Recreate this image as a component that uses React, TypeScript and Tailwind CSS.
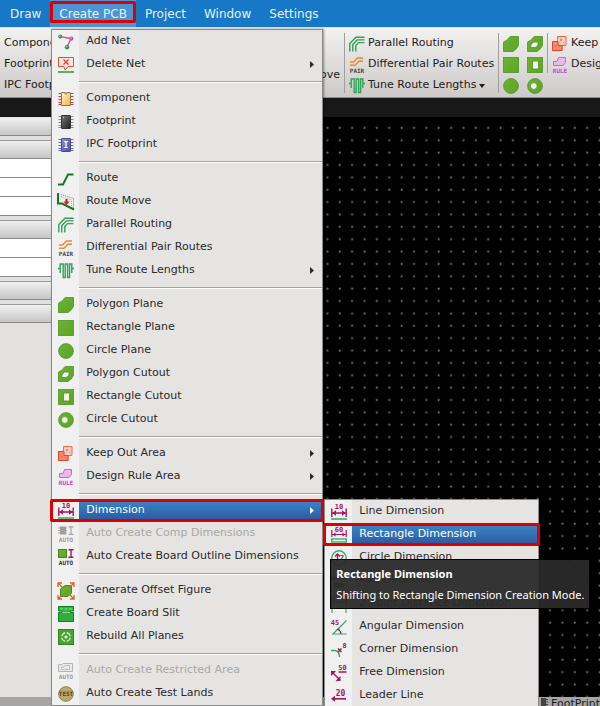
import type { ReactNode } from "react";
import clsx from "clsx";

type IconProps = { children: ReactNode };

const Icon = ({ children }: IconProps) => (
    <svg viewBox="0 0 16 16" className="h-4 w-4 shrink-0 overflow-visible" fill="none" aria-hidden="true">
        {children}
    </svg>
);

// tiny caption used inside of the icons
const Caption = ({ x = 8, y = 16, fill, size = 6, children }: any) => (
    <text
        x={x}
        y={y}
        fill={fill}
        fontSize={size}
        fontWeight="bold"
        textAnchor="middle"
        fontFamily='"DejaVu Sans Mono", monospace'
    >
        {children}
    </text>
);

const pins = [2, 5, 8, 11, 13];

const Chip = ({ body, edge, pin, children }: any) => (
    <Icon>
        {pins.map((y) => (
            <path key={y} d={`M0.5 ${y + 0.5}H15.5`} stroke={pin} />
        ))}
        <rect x="3.5" y="1.5" width="9" height="13" rx="0.5" fill={body} stroke={edge} />
        {children}
    </Icon>
);

const AddNetIcon = () => (
    <Icon>
        <path d="M2 2.5L13 4.5L9 13" stroke="#d64f9a" strokeWidth="1.4" />
        <circle cx="2.2" cy="2.6" r="2" fill="#2f9350" />
        <circle cx="13.4" cy="4.6" r="2.1" fill="#c8508e" />
        <circle cx="9" cy="13.2" r="2.2" fill="#2f9350" />
        <circle cx="1.8" cy="2.2" r="0.8" fill="#a9dcb6" />
        <circle cx="13" cy="4.2" r="0.8" fill="#f0b6d6" />
        <circle cx="8.6" cy="12.8" r="0.8" fill="#a9dcb6" />
    </Icon>
);

const DeleteNetIcon = () => (
    <Icon>
        <path d="M0.5 0.5H15.5V9.5H10L7 13L6 9.5H0.5Z" fill="#fde4de" stroke="#e2503a" />
        <path d="M5.5 2.5L10.5 7.5M10.5 2.5L5.5 7.5" stroke="#e03a28" strokeWidth="1.2" />
        <path d="M0 15H16" stroke="#18981e" strokeWidth="1.4" />
    </Icon>
);

const ComponentIcon = () => (
    <Chip body="url(#amber)" edge="#8d7646" pin="#c63b45">
        <path d="M6.5 1.5a1.5 1.5 0 0 0 3 0" fill="#f0f0f0" stroke="#8d7646" />
    </Chip>
);

const FootprintIcon = () => (
    <Chip body="url(#black)" edge="#333" pin="#8a8a8a">
        <rect x="5" y="3" width="1" height="1" fill="#d4d46a" />
    </Chip>
);

const IpcIcon = () => (
    <Chip body="url(#indigo)" edge="#4a4a94" pin="#6b6ba4">
        <Caption y={11} size={8} fill="#fff">
            I
        </Caption>
    </Chip>
);

const RouteIcon = () => (
    <Icon>
        <path d="M0 13.5H5L10 3.5H15.5" stroke="#0f7d1c" strokeWidth="2" />
    </Icon>
);

const RouteMoveIcon = () => (
    <Icon>
        <path d="M3 0.5L15.5 4.5V14" stroke="#3fa05a" strokeDasharray="1 1" />
        <path d="M3 2.5L13.5 6V12" stroke="#7dbf8f" strokeDasharray="1 1" />
        <path d="M0 -1V9.5H4L16 15.5" stroke="#12791f" strokeWidth="2" />
        <path d="M8.5 5V9" stroke="#d8141c" strokeWidth="2" />
        <path d="M5.5 7.5H11.5L8.5 11Z" fill="#d8141c" />
    </Icon>
);

const ParallelIcon = () => (
    <Icon>
        <path
            d="M0.8 15.5V7.5L7 1.2H15.5M3.8 15.5V8.5L8.2 3.9H15.5M6.8 15.5V9.5L9.5 6.6H15.5"
            stroke="#2f9f54"
            strokeWidth="1.4"
        />
    </Icon>
);

const PairIcon = () => (
    <Icon>
        <path d="M1 5H4.5L8.5 1H14M1 8.2H6L10 4.2H14" stroke="#ee8a2c" strokeWidth="1.4" />
        <Caption fill="#4a4538">PAIR</Caption>
    </Icon>
);

// meander between two short leads
const TuneIcon = () => (
    <Icon>
        <path
            d="M0 5.5H2.2M2.2 10V1H5.2V14.5H7.2V1H9.6V14.5H11.6V1H13.8V10M13.8 5.5H16"
            stroke="#2fa458"
            strokeWidth="1.4"
        />
    </Icon>
);

const PolygonIcon = ({ cutout }: { cutout?: boolean }) => (
    <Icon>
        <path
            d="M7 0.5H15.5V9.5Q14 13 10 15.5H0.5V6Q4 5 7 0.5Z"
            fill="url(#leaf)"
            stroke="#4f9422"
            strokeWidth="0.8"
            strokeLinejoin="round"
        />
        {cutout && <path d="M6.5 6H11V9Q9.5 11.5 7.5 11.5H3.8V9Q5 8 6.5 6Z" fill="#f4f4f4" stroke="#4f9422" strokeWidth="0.8" />}
    </Icon>
);

const RectangleIcon = ({ cutout }: { cutout?: boolean }) => (
    <Icon>
        <rect x="0.5" y="0.5" width="15" height="15" fill="url(#leaf)" stroke="#4f9422" strokeWidth="0.8" />
        {cutout && <rect x="5.5" y="4" width="6" height="8" fill="#f4f4f4" stroke="#4f9422" strokeWidth="0.8" />}
    </Icon>
);

const CircleIcon = ({ cutout }: { cutout?: boolean }) => (
    <Icon>
        <circle cx="8" cy="8" r="7.4" fill="url(#leaf)" stroke="#4f9422" strokeWidth="0.8" />
        {cutout && <circle cx="6.8" cy="8" r="3.4" fill="#f4f4f4" stroke="#4f9422" strokeWidth="0.8" />}
    </Icon>
);

const KeepOutIcon = () => (
    <Icon>
        <path d="M5.5 0.5H14V9.5H10V14.5H0.5V5.5H5.5Z" fill="#fbc9b8" stroke="#ee6a4c" />
        <path d="M0.5 5.5H6V9.5H10V14.5H0.5Z" fill="#f58b6c" stroke="#e2452c" />
        <path d="M8 3L10 5M10 3L8 5M11 6L12.5 7.5M2.5 9L5 12M5 9L2.5 12M7 11L8.5 13" stroke="#e9674a" strokeWidth="0.7" />
    </Icon>
);

const RuleIcon = () => (
    <Icon>
        <path d="M6.5 0.5H13.5V5.5L11 8.5H1.5V4.5H5Z" fill="#eeb8ee" stroke="#d160d1" />
        <Caption fill="#cb42cb">RULE</Caption>
    </Icon>
);

const LineDimIcon = () => (
    <Icon>
        <Caption y={5} size={7} fill="#a8145c">
            10
        </Caption>
        <path d="M0.8 4.5V13M15.2 4.5V13M1.5 9H14.5" stroke="#a8145c" strokeWidth="1.4" />
        <path d="M1.5 9L5 6.2V11.8ZM14.5 9L11 6.2V11.8Z" fill="#a8145c" />
        <path d="M0 15H16" stroke="#35b06a" strokeWidth="1.6" />
    </Icon>
);

const RectDimIcon = () => (
    <Icon>
        <Caption y={5} size={7} fill="#a8145c">
            60
        </Caption>
        <path d="M0.8 3V10M15.2 3V10M1.5 7.5H14.5" stroke="#a8145c" strokeWidth="1.2" />
        <path d="M1.5 7.5L4.5 5.5V9.5ZM14.5 7.5L11.5 5.5V9.5Z" fill="#a8145c" />
        <rect x="0.7" y="12" width="14.6" height="3" stroke="#35b06a" strokeWidth="1.4" />
    </Icon>
);

const CircleDimIcon = () => (
    <Icon>
        <circle cx="8" cy="8" r="7.2" stroke="#35b06a" strokeWidth="1.4" />
        <path d="M6.5 12V4.5M4 6.5L6.5 4L9 6.5" stroke="#a8145c" strokeWidth="1.4" />
        <Caption x={11} y={10} size={7} fill="#a8145c">
            2
        </Caption>
    </Icon>
);

const PadDimIcon = () => (
    <Icon>
        <path d="M1 2V9M15 2V9M1 5.5H15" stroke="#a8145c" />
        <rect x="3" y="10" width="10" height="5" fill="#35b06a" />
    </Icon>
);

const PointDimIcon = () => (
    <Icon>
        <path d="M1 2V10M15 2V10M1 6H15" stroke="#a8145c" />
        <path d="M1 12V17M15 12V17" stroke="#35b06a" strokeWidth="1.2" />
    </Icon>
);

const AngularIcon = () => (
    <Icon>
        <Caption x={4} y={5.5} size={7} fill="#a8145c">
            45
        </Caption>
        <path d="M15.5 1.5L2 15H15.5" stroke="#35a868" strokeWidth="1.2" />
        <path d="M6.5 10A6 6 0 0 1 10 15M6 10.5H8.5" stroke="#a8145c" strokeWidth="1.2" />
    </Icon>
);

const CornerIcon = () => (
    <Icon>
        <path d="M0 8.5H4Q8.5 9 8.5 15" stroke="#35a868" strokeWidth="1.5" />
        <path d="M7 6.5L10.5 10M10.5 6.5L7 10" stroke="#a8145c" strokeWidth="1.5" />
        <Caption x={13.5} y={6} size={7} fill="#a8145c">
            8
        </Caption>
    </Icon>
);

const FreeIcon = () => (
    <Icon>
        <Caption x={11.5} y={5} size={7} fill="#a8145c">
            50
        </Caption>
        <path d="M7.5 7H15.5M1 7L9 15" stroke="#a8145c" strokeWidth="1.4" />
        <path d="M0 6H5L0 11ZM9.5 16H4.5L9.5 11Z" fill="#a8145c" />
    </Icon>
);

const LeaderIcon = () => (
    <Icon>
        <Caption x={9.5} y={8} size={8} fill="#a8145c">
            20
        </Caption>
        <path d="M2 10.8H15" stroke="#a8145c" strokeWidth="1.6" />
        <path d="M0 10.8L4 7.8V13.8Z" fill="#a8145c" />
    </Icon>
);

const AutoCompIcon = () => (
    <Icon>
        <rect x="2" y="0.5" width="6" height="8" fill="#9b9b9b" />
        <path d="M0 2H9M0 4.5H9M0 7H9" stroke="#a5a5a5" />
        <path d="M10.5 0.8H15.5M10.5 8.3H15.5M13 1V8" stroke="#a5a5a5" strokeWidth="1.2" />
        <Caption fill="#9a9a9a">AUTO</Caption>
    </Icon>
);

const AutoBoardIcon = () => (
    <Icon>
        <rect x="0.5" y="0.5" width="8" height="8" fill="url(#leaf)" stroke="#3c8f1a" />
        <path d="M10.5 0.8H15.5M10.5 8.3H15.5M13 1V8" stroke="#a8145c" strokeWidth="1.4" />
        <Caption fill="#333">AUTO</Caption>
    </Icon>
);

const OffsetIcon = () => (
    <Icon>
        <path d="M7 2.5H13.5V10L10 13.5H2.5V6Z" fill="url(#leaf)" stroke="#3f9020" />
        <path
            d="M0 4V0H4M12 0H16V4M16 12V16H12M4 16H0V12M0.5 0.5L4.5 4.5M15.5 0.5L11.5 4.5M15.5 15.5L11.5 11.5M0.5 15.5L4.5 11.5"
            stroke="#e0602c"
            strokeWidth="1.3"
        />
    </Icon>
);

const SlitIcon = () => (
    <Icon>
        <path d="M0.5 0.5H15.5V5H12V6.5H4V5H0.5Z" fill="#2fb43c" stroke="#12801f" />
        <path d="M0.5 6.5H15.5V15.5H0.5Z" fill="#2fae3a" stroke="#12801f" />
        <path d="M2 3H5M6.5 3H9.5M11 3H14M4 6.5H12" stroke="#aee8ae" strokeWidth="0.8" />
    </Icon>
);

const RebuildIcon = () => (
    <Icon>
        <rect x="0.5" y="0.5" width="15" height="15" fill="#4ba332" stroke="#348524" />
        <circle cx="8" cy="8" r="4.2" stroke="#d9f0d2" strokeWidth="1.4" />
        <path d="M8 2.5V5.5M8 10.5V13.5M2.5 8H5.5M10.5 8H13.5" stroke="#4ba332" strokeWidth="1.6" />
        <circle cx="8" cy="8" r="1.6" fill="#e4f6de" />
    </Icon>
);

const RestrictedIcon = () => (
    <Icon>
        <path d="M0.5 8.5V1.5H4L5 0.5H14.5V8.5Z" fill="#e9e9e9" stroke="#b5b5b5" />
        <path d="M3.5 6.5V4H6L7 2.5H11.5V6.5Z" stroke="#c0c0c0" />
        <Caption fill="#9a9a9a">AUTO</Caption>
    </Icon>
);

const TestIcon = () => (
    <Icon>
        <circle cx="8" cy="8" r="7.3" fill="#b9a967" stroke="#8c8052" />
        <Caption y={10} fill="#4a4226">
            TEST
        </Caption>
    </Icon>
);

type Item = {
    label: string;
    icon: ReactNode;
    submenu?: boolean;
    disabled?: boolean;
    active?: boolean;
};

const menuGroups: Item[][] = [
    [
        { label: "Add Net", icon: <AddNetIcon /> },
        { label: "Delete Net", icon: <DeleteNetIcon />, submenu: true },
    ],
    [
        { label: "Component", icon: <ComponentIcon /> },
        { label: "Footprint", icon: <FootprintIcon /> },
        { label: "IPC Footprint", icon: <IpcIcon /> },
    ],
    [
        { label: "Route", icon: <RouteIcon /> },
        { label: "Route Move", icon: <RouteMoveIcon /> },
        { label: "Parallel Routing", icon: <ParallelIcon /> },
        { label: "Differential Pair Routes", icon: <PairIcon /> },
        { label: "Tune Route Lengths", icon: <TuneIcon />, submenu: true },
    ],
    [
        { label: "Polygon Plane", icon: <PolygonIcon /> },
        { label: "Rectangle Plane", icon: <RectangleIcon /> },
        { label: "Circle Plane", icon: <CircleIcon /> },
        { label: "Polygon Cutout", icon: <PolygonIcon cutout /> },
        { label: "Rectangle Cutout", icon: <RectangleIcon cutout /> },
        { label: "Circle Cutout", icon: <CircleIcon cutout /> },
    ],
    [
        { label: "Keep Out Area", icon: <KeepOutIcon />, submenu: true },
        { label: "Design Rule Area", icon: <RuleIcon />, submenu: true },
    ],
    [
        { label: "Dimension", icon: <LineDimIcon />, submenu: true, active: true },
        { label: "Auto Create Comp Dimensions", icon: <AutoCompIcon />, disabled: true },
        { label: "Auto Create Board Outline Dimensions", icon: <AutoBoardIcon /> },
    ],
    [
        { label: "Generate Offset Figure", icon: <OffsetIcon /> },
        { label: "Create Board Slit", icon: <SlitIcon /> },
        { label: "Rebuild All Planes", icon: <RebuildIcon /> },
    ],
    [
        { label: "Auto Create Restricted Area", icon: <RestrictedIcon />, disabled: true },
        { label: "Auto Create Test Lands", icon: <TestIcon /> },
    ],
];

const dimensionItems: Item[] = [
    { label: "Line Dimension", icon: <LineDimIcon /> },
    { label: "Rectangle Dimension", icon: <RectDimIcon />, active: true },
    { label: "Circle Dimension", icon: <CircleDimIcon /> },
    { label: "Pad Dimension", icon: <PadDimIcon /> },
    { label: "2-Point Distance Dimension", icon: <PointDimIcon /> },
    { label: "Angular Dimension", icon: <AngularIcon /> },
    { label: "Corner Dimension", icon: <CornerIcon /> },
    { label: "Free Dimension", icon: <FreeIcon /> },
    { label: "Leader Line", icon: <LeaderIcon /> },
];

// red marker round the highlighted entries
const Marker = () => (
    <span className="pointer-events-none absolute -inset-x-0.5 inset-y-0 rounded-xs border-3 border-[#dc0000]" />
);

const MenuItem = ({ item, children }: { item: Item; children?: ReactNode }) => (
    <li className="relative">
        <button
            type="button"
            disabled={item.disabled}
            className={clsx(
                "flex h-[23px] w-full items-center text-left whitespace-nowrap",
                item.disabled ? "text-[#a8a8a8]" : item.active ? "text-white" : "text-[#2a2a2a]"
            )}
        >
            <span className="flex w-[27px] shrink-0 justify-center">{item.icon}</span>
            <span
                className={clsx(
                    "flex h-full grow items-center justify-between pr-2 pl-[7px]",
                    item.active && "bg-linear-to-b from-[#3a8aca] to-[#2b559c]"
                )}
            >
                {item.label}
                {item.submenu && (
                    <svg viewBox="0 0 4 7" className="h-[7px] w-1" fill="currentColor" aria-hidden="true">
                        <path d="M0 0L4 3.5L0 7Z" />
                    </svg>
                )}
            </span>
        </button>
        {item.active && <Marker />}
        {children}
    </li>
);

const Tooltip = () => (
    <div
        role="tooltip"
        className="absolute top-[60px] left-1.5 z-20 flex flex-col border border-black bg-[#2a2a2a]/95 px-[5px] py-[3px] font-['Noto_Sans',sans-serif] leading-[21px] whitespace-nowrap text-white"
    >
        <strong>Rectangle Dimension</strong>
        <span>Shifting to Rectangle Dimension Creation Mode.</span>
    </div>
);

const menuPanel = "border border-[#8a8a8a] bg-linear-to-r from-[#f0f0f0] from-[27px] to-[#e5e4e2] to-[27px]";

const DimensionMenu = () => (
    <div className="absolute top-0 left-full z-10 ml-0.5 w-[215px]">
        <ul className={menuPanel}>
            {dimensionItems.map((item) => (
                <MenuItem key={item.label} item={item} />
            ))}
        </ul>
        <Tooltip />
    </div>
);

const CreatePcbMenu = () => (
    <ul
        className={clsx(
            "absolute top-full left-px z-10 mt-0.5 w-[272px] text-[11px] shadow-[1px_0_2px_#0006]",
            menuPanel
        )}
    >
        {menuGroups.map((group, index) => (
            <li key={index}>
                {index > 0 && (
                    <div className="flex h-[11px] items-center pl-[27px]">
                        <hr className="h-0.5 grow border-t border-b border-t-[#a3a3a3] border-b-white" />
                    </div>
                )}
                <ul>
                    {group.map((item) => (
                        <MenuItem key={item.label} item={item}>
                            {item.active && <DimensionMenu />}
                        </MenuItem>
                    ))}
                </ul>
            </li>
        ))}
    </ul>
);

const NavButton = ({ label }: { label: string }) => (
    <button type="button" className="h-full px-[9px]">
        {label}
    </button>
);

const MenuBar = () => (
    <nav className="flex h-[27px] shrink-0 bg-[#1878c8] pl-px text-xs text-[#e6f1fb]">
        <NavButton label="Draw" />
        <div className="relative bg-[#4a94d4]">
            <NavButton label="Create PCB" />
            <span className="pointer-events-none absolute inset-x-0 top-px bottom-1 rounded-xs border-3 border-[#dc0000]" />
            <CreatePcbMenu />
        </div>
        <NavButton label="Project" />
        <NavButton label="Window" />
        <NavButton label="Settings" />
    </nav>
);

const RibbonButton = ({ icon, children }: { icon?: ReactNode; children: ReactNode }) => (
    <button type="button" className="flex h-[21px] items-center gap-[3px] whitespace-nowrap">
        {icon}
        {children}
    </button>
);

const Divider = ({ short }: { short?: boolean }) => (
    <div className={clsx("w-px shrink-0 bg-[#a09f9e]", short ? "mb-5" : "mb-0")} />
);

const Ribbon = () => (
    <div className="mt-px flex h-[70px] shrink-0 gap-1 overflow-hidden border-b border-[#8f8f8f] bg-linear-to-b from-[#f3f2f1] to-[#cdc9c8] pt-[5px] pb-1 text-[11px] text-[#1c1c1c]">
        <div className="flex w-[340px] shrink-0 justify-between pl-1">
            <div>
                <RibbonButton>Component</RibbonButton>
                <RibbonButton>Footprint</RibbonButton>
                <RibbonButton>IPC Footprint</RibbonButton>
            </div>
            <button type="button" className="flex flex-col items-center gap-2.5 pt-2 whitespace-nowrap">
                <RouteMoveIcon />
                Route Move
            </button>
        </div>
        <Divider />
        <div className="w-[145px] shrink-0">
            <RibbonButton icon={<ParallelIcon />}>Parallel Routing</RibbonButton>
            <RibbonButton icon={<PairIcon />}>Differential Pair Routes</RibbonButton>
            <RibbonButton icon={<TuneIcon />}>
                Tune Route Lengths
                <svg viewBox="0 0 6 4" className="h-1 w-1.5" fill="currentColor" aria-hidden="true">
                    <path d="M0 0H6L3 4Z" />
                </svg>
            </RibbonButton>
        </div>
        <Divider />
        <div className="grid shrink-0 grid-cols-2 content-start gap-x-2">
            <button type="button" aria-label="Polygon Plane" className="flex h-[21px] items-center">
                <PolygonIcon />
            </button>
            <button type="button" aria-label="Polygon Cutout" className="flex h-[21px] items-center">
                <PolygonIcon cutout />
            </button>
            <button type="button" aria-label="Rectangle Plane" className="flex h-[21px] items-center">
                <RectangleIcon />
            </button>
            <button type="button" aria-label="Rectangle Cutout" className="flex h-[21px] items-center">
                <RectangleIcon cutout />
            </button>
            <button type="button" aria-label="Circle Plane" className="flex h-[21px] items-center">
                <CircleIcon />
            </button>
            <button type="button" aria-label="Circle Cutout" className="flex h-[21px] items-center">
                <CircleIcon cutout />
            </button>
        </div>
        <Divider short />
        <div className="shrink-0">
            <RibbonButton icon={<KeepOutIcon />}>Keep Out Area</RibbonButton>
            <RibbonButton icon={<RuleIcon />}>Design Rule Area</RibbonButton>
        </div>
    </div>
);

// number of empty rows under each panel header
const panels = [0, 3, 2, 0, 0];

const SidePanel = () => (
    <aside className="flex w-[323px] shrink-0 flex-col gap-1 bg-[#e2e1e0] pt-px">
        {panels.map((rows, index) => (
            <div key={index} className="border-t border-[#9a9a9a] first:border-t-0">
                <div className="h-[18px] border-b border-[#8a8a8a] bg-linear-to-b from-[#f0f0f0] to-[#c6c6c6]" />
                {Array.from({ length: rows }, (_, row) => (
                    <div key={row} className="h-[19px] border-b border-[#8a8a8a] bg-white" />
                ))}
            </div>
        ))}
    </aside>
);

const Canvas = () => (
    <svg className="min-w-0 grow bg-black" aria-hidden="true">
        <defs>
            <pattern id="dots" x="-2" y="4.5" width="12.37" height="12.37" patternUnits="userSpaceOnUse">
                <circle cx="6.4" cy="6.4" r="1.1" fill="#6a6a6a" />
            </pattern>
        </defs>
        <rect width="100%" height="100%" fill="url(#dots)" />
    </svg>
);

const Gradients = () => (
    <svg className="absolute h-0 w-0" aria-hidden="true">
        <defs>
            <linearGradient id="leaf" x2="1" y2="1">
                <stop stopColor="#6bb330" />
                <stop offset="1" stopColor="#5ca526" />
            </linearGradient>
            <linearGradient id="amber" x2="1" y2="1">
                <stop stopColor="#fff3c4" />
                <stop offset="1" stopColor="#f0b545" />
            </linearGradient>
            <linearGradient id="black" x2="1" y2="1">
                <stop stopColor="#7a7a7a" />
                <stop offset="1" stopColor="#1c1c1c" />
            </linearGradient>
            <linearGradient id="indigo" x2="1" y2="1">
                <stop stopColor="#8f8fd6" />
                <stop offset="1" stopColor="#4c4ca6" />
            </linearGradient>
        </defs>
    </svg>
);

const App = () => {
    return (
        <div className="flex h-screen flex-col overflow-hidden bg-[#e2e1e0] font-['DejaVu_Sans',sans-serif]">
            <Gradients />
            <MenuBar />
            <Ribbon />
            <div className="h-[19px] shrink-0 bg-[#181818]" />
            <main className="flex min-h-0 grow">
                <SidePanel />
                <Canvas />
            </main>
            {/* document tabs */}
            <footer className="flex h-[9px] shrink-0 justify-end overflow-hidden bg-[#a6a6a6] text-[11px] leading-[14px] text-[#1c1c1c]">
                <a href="#footprint" className="flex gap-0.5">
                    <svg viewBox="0 0 8 9" className="h-[9px] w-2" aria-hidden="true">
                        <path d="M0 1H5V9H0Z" fill="#444" />
                        <path d="M5 2.5H7M5 5H7M5 7.5H7" stroke="#444" />
                    </svg>
                    FootPrint
                </a>
            </footer>
        </div>
    );
};

export default App;
